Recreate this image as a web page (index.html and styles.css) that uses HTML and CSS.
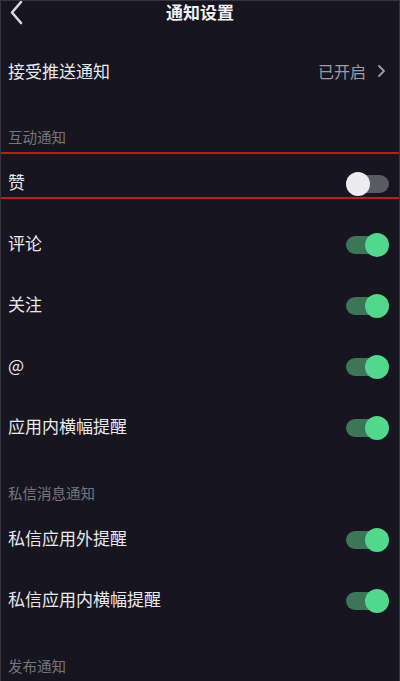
FILE: index.html
```html
<!DOCTYPE html>
<html lang="zh-CN">
<head>
  <meta charset="UTF-8" />
  <title>通知设置</title>
  <link rel="stylesheet" href="styles.css">
</head>
<body>
  <div class="screen">
    <header class="topbar">
      <svg class="back" width="16" height="24" viewBox="0 0 16 24">
        <path d="M13 1 L4 11.5 L13 22" fill="none" stroke="#d8d8de" stroke-width="2.6" stroke-linecap="round" stroke-linejoin="round"/>
      </svg>
      <h1>通知设置</h1>
    </header>

    <div class="row row-first">
      <span class="label">接受推送通知</span>
      <span class="value">已开启 <svg width="10" height="14" viewBox="0 0 10 14"><path d="M3 2 L8 7 L3 12" fill="none" stroke="#9c9ca4" stroke-width="1.8" stroke-linecap="round" stroke-linejoin="round"/></svg></span>
    </div>

    <div class="section">互动通知</div>
    <div class="row marked">
      <span class="label">赞</span>
      <span class="toggle"></span>
    </div>
    <div class="row">
      <span class="label">评论</span>
      <span class="toggle on"></span>
    </div>
    <div class="row">
      <span class="label">关注</span>
      <span class="toggle on"></span>
    </div>
    <div class="row">
      <span class="label">@</span>
      <span class="toggle on"></span>
    </div>
    <div class="row">
      <span class="label">应用内横幅提醒</span>
      <span class="toggle on"></span>
    </div>

    <div class="section">私信消息通知</div>
    <div class="row">
      <span class="label">私信应用外提醒</span>
      <span class="toggle on"></span>
    </div>
    <div class="row">
      <span class="label">私信应用内横幅提醒</span>
      <span class="toggle on"></span>
    </div>

    <div class="section">发布通知</div>
  </div>
</body>
</html>
```

FILE: styles.css
```css
body {
  margin: 0;
  background-color: #161520;
  font-family: "Noto Sans CJK SC", "Noto Sans", sans-serif;
  color: #e8e8ed;
}

.screen {
  width: 400px;
  height: 681px;
  box-sizing: border-box;
  border: 1px solid #34333e;
  border-bottom: none;
  overflow: hidden;
}

.topbar {
  height: 41px;
  display: flex;
  align-items: flex-start;
  justify-content: center;
  position: relative;
}

.topbar h1 {
  margin: 0;
  font-size: 17px;
  font-weight: bold;
  line-height: 22px;
  color: #f0f0f4;
}

.back {
  position: absolute;
  left: 7px;
  top: 0;
}

.row {
  height: 61px;
  display: flex;
  align-items: center;
  justify-content: space-between;
  padding: 0 10px 0 7px;
  position: relative;
}

.row-first {
  height: 60px;
}

.label {
  font-size: 17px;
  line-height: 24px;
  padding-bottom: 3px;
}

.value {
  display: flex;
  align-items: center;
  gap: 10px;
  font-size: 16px;
  color: #9c9ca4;
  padding-right: 3px;
  padding-bottom: 2px;
}

.section {
  height: 51px;
  box-sizing: border-box;
  padding: 25px 7px 0;
  font-size: 14.5px;
  line-height: 20px;
  color: #75757f;
}

.marked::after {
  content: "";
  position: absolute;
  left: -1px;
  right: -1px;
  top: -1px;
  height: 43px;
  border-top: 2px solid #b3201f;
  border-bottom: 2px solid #b3201f;
}

.toggle {
  width: 43px;
  height: 24px;
  position: relative;
}

.toggle::before {
  content: "";
  position: absolute;
  left: 8px;
  right: 0;
  top: 3px;
  height: 18px;
  border-radius: 9px;
  background: #5a5a62;
}

.toggle::after {
  content: "";
  position: absolute;
  left: 0;
  top: 0;
  width: 24px;
  height: 24px;
  border-radius: 50%;
  background: #ebebf0;
}

.toggle.on::before {
  left: 0;
  right: 8px;
  background: #3d7559;
}

.toggle.on::after {
  left: 19px;
  background: #52d88d;
}
```
